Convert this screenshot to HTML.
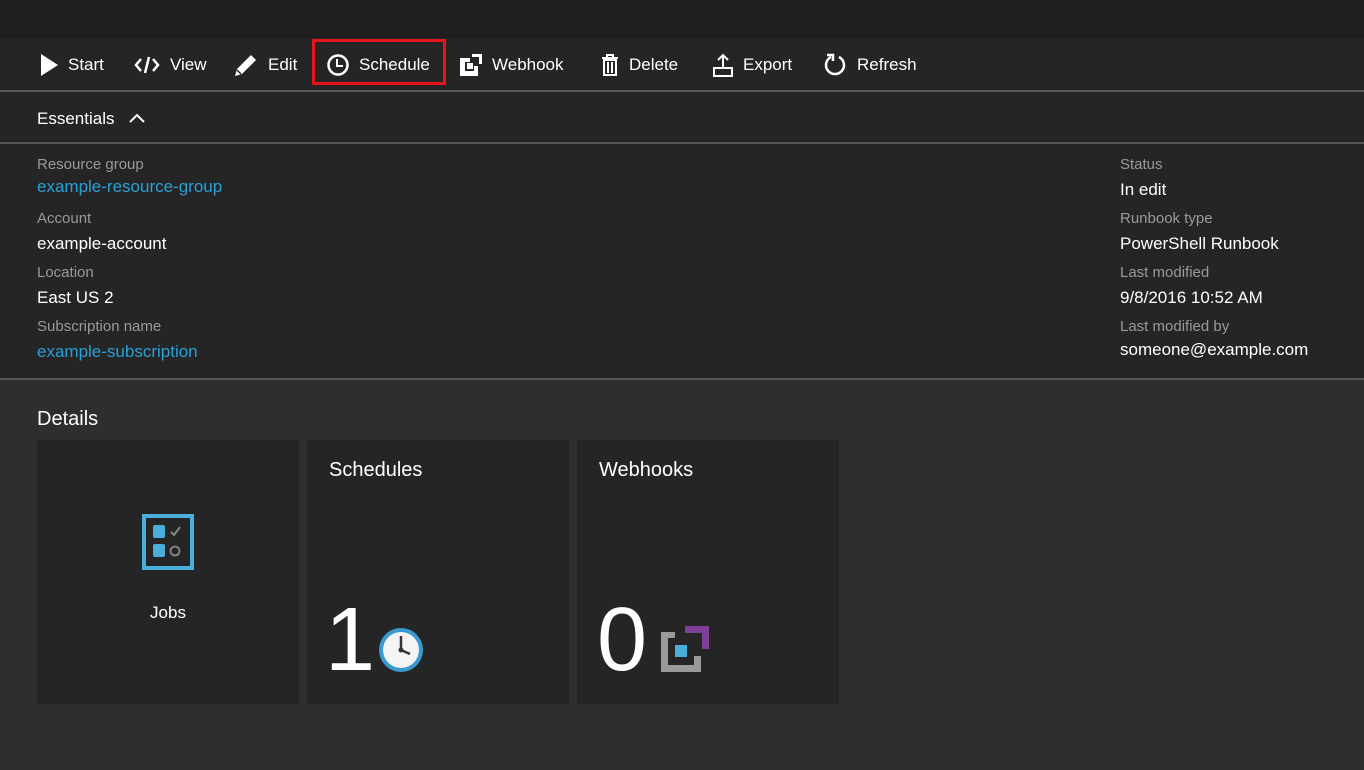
<!DOCTYPE html>
<html><head><style>
*{margin:0;padding:0;box-sizing:border-box}
body{width:1364px;height:770px;overflow:hidden;background:#2e2e2e;font-family:"Segoe UI","Liberation Sans",sans-serif;color:#fff;position:relative}
.top{position:absolute;left:0;top:0;width:1364px;height:38px;background:#1f1f1f}
.bar{position:absolute;left:0;top:38px;width:1364px;height:342px;background:#252525}
.line{position:absolute;left:0;width:1364px;height:2px;background:#555}
.tb{position:absolute;top:53px;height:24px;font-size:17px;line-height:24px;display:flex;align-items:center}
.tb svg{margin-right:10px}
.t{position:absolute;font-size:17px;white-space:nowrap;transform:translateY(2px)}
.l{position:absolute;font-size:15px;color:#9a9a9a;white-space:nowrap;transform:translateY(1px)}
.a{color:#2aa0d8}
.tile{position:absolute;top:440px;width:262px;height:264px;background:#252525}
</style></head><body>
<div class="top"></div>
<div class="bar"></div>
<div class="line" style="top:90px"></div>
<div class="line" style="top:142px"></div>
<div class="line" style="top:378px"></div>

<div class="tb" style="left:40px"><svg width="18" height="22" viewBox="0 0 18 22"><path d="M1 0L18 11L1 22Z" fill="#fff"/></svg>Start</div>
<div class="tb" style="left:134px"><svg width="26" height="20" viewBox="0 0 26 20"><path d="M7 4L2 10L7 16M19 4L24 10L19 16M15 2L11 18" stroke="#fff" stroke-width="2.5" fill="none"/></svg>View</div>
<div class="tb" style="left:234px"><svg width="24" height="24" viewBox="0 0 24 24"><path d="M1 23L3 16L17 2L22 7L8 21Z" fill="#fff"/><path d="M3 17L7 21" stroke="#252525" stroke-width="1.5"/></svg>Edit</div>
<div style="position:absolute;left:312px;top:39px;width:134px;height:46px;border:3px solid #e8141e"></div>
<div class="tb" style="left:327px"><svg width="22" height="22" viewBox="0 0 22 22"><circle cx="11" cy="11" r="9.5" stroke="#fff" stroke-width="2.5" fill="none"/><path d="M10 5V12H16" stroke="#fff" stroke-width="2" fill="none"/></svg>Schedule</div>
<div class="tb" style="left:460px"><svg width="22" height="22" viewBox="0 0 22 22"><path d="M0 4H10V8H5V17H14V12H18V22H0Z M12 0H22V10H19V3H12Z" fill="#fff"/><rect x="7" y="9" width="6" height="6" fill="#fff"/></svg>Webhook</div>
<div class="tb" style="left:601px"><svg width="18" height="22" viewBox="0 0 18 22"><path d="M1 4H17M6 4V1H12V4M3 6H15V21H3Z M7 8V19M11 8V19" stroke="#fff" stroke-width="2" fill="none"/></svg>Delete</div>
<div class="tb" style="left:713px"><svg width="20" height="24" viewBox="0 0 20 24"><path d="M10 14V2M5 7L10 2L15 7" stroke="#fff" stroke-width="2" fill="none"/><rect x="1" y="15" width="18" height="8" stroke="#fff" stroke-width="2" fill="none"/></svg>Export</div>
<div class="tb" style="left:823px"><svg width="24" height="24" viewBox="0 0 24 24"><path d="M8 4A9 9 0 1 0 16 4" stroke="#fff" stroke-width="2.5" fill="none"/><path d="M4 2H10V8" stroke="#fff" stroke-width="2.5" fill="none"/></svg>Refresh</div>

<div class="t" style="left:37px;top:107px">Essentials</div>
<svg style="position:absolute;left:129px;top:113px" width="16" height="10" viewBox="0 0 16 10"><path d="M1 9L8 2L15 9" stroke="#fff" stroke-width="2" fill="none"/></svg>

<div class="l" style="left:37px;top:155px">Resource group</div>
<div class="t a" style="left:37px;top:175px">example-resource-group</div>
<div class="l" style="left:37px;top:209px">Account</div>
<div class="t" style="left:37px;top:232px">example-account</div>
<div class="l" style="left:37px;top:263px">Location</div>
<div class="t" style="left:37px;top:286px">East US 2</div>
<div class="l" style="left:37px;top:317px">Subscription name</div>
<div class="t a" style="left:37px;top:340px">example-subscription</div>

<div class="l" style="left:1120px;top:155px">Status</div>
<div class="t" style="left:1120px;top:178px">In edit</div>
<div class="l" style="left:1120px;top:209px">Runbook type</div>
<div class="t" style="left:1120px;top:232px">PowerShell Runbook</div>
<div class="l" style="left:1120px;top:263px">Last modified</div>
<div class="t" style="left:1120px;top:286px">9/8/2016 10:52 AM</div>
<div class="l" style="left:1120px;top:317px">Last modified by</div>
<div class="t" style="left:1120px;top:338px">someone@example.com</div>

<div class="t" style="left:37px;top:406px;font-size:20px">Details</div>

<div class="tile" style="left:37px">
<svg style="position:absolute;left:105px;top:74px" width="52" height="56" viewBox="0 0 52 56"><rect x="2" y="2" width="48" height="52" stroke="#4aaedb" stroke-width="4" fill="none"/><rect x="11" y="11" width="12" height="13" rx="2" fill="#4aaedb"/><rect x="11" y="30" width="12" height="13" rx="2" fill="#4aaedb"/><path d="M29 18L32 21L38 13" stroke="#888" stroke-width="2" fill="none"/><circle cx="33" cy="37" r="4.5" stroke="#888" stroke-width="1.8" fill="none"/></svg>
<div class="t" style="left:0;width:262px;text-align:center;top:161px">Jobs</div>
</div>
<div class="tile" style="left:307px">
<div class="t" style="left:22px;top:17px;font-size:20px">Schedules</div>
<div class="t" style="left:18px;top:148px;font-size:90px;line-height:100px">1</div>
<svg style="position:absolute;left:70px;top:186px" width="48" height="48" viewBox="0 0 48 48"><circle cx="24" cy="24" r="22" fill="#3a9ad0"/><circle cx="24" cy="24" r="18" fill="#f4f4f4"/><path d="M24 10V24L33 28" stroke="#333" stroke-width="2.5" fill="none"/><circle cx="24" cy="24" r="2.5" fill="#333"/></svg>
</div>
<div class="tile" style="left:577px">
<div class="t" style="left:22px;top:17px;font-size:20px">Webhooks</div>
<div class="t" style="left:20px;top:148px;font-size:90px;line-height:100px">0</div>
<svg style="position:absolute;left:84px;top:186px" width="48" height="46" viewBox="0 0 48 46"><path d="M0 6H14V12H7V39H33V30H40V46H0Z" fill="#9a9a9a"/><path d="M24 0H48V23H41V7H24Z" fill="#7e3f98"/><rect x="14" y="19" width="12" height="12" fill="#4aaedb"/></svg>
</div>
</body></html>
